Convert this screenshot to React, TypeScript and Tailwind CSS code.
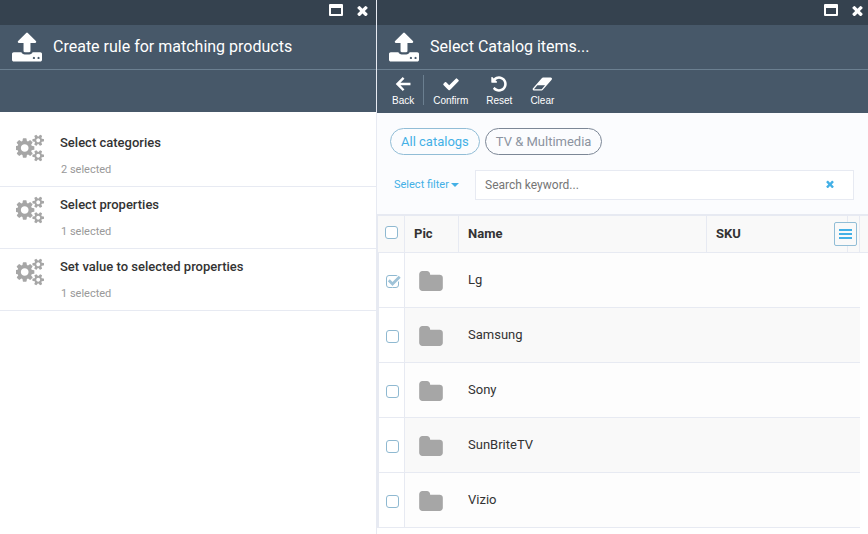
import type { ReactNode } from "react";

const paths = {
  upload:
    "M1280 1472q0-26-19-45t-45-19-45 19-19 45 19 45 45 19 45-19 19-45zm256 0q0-26-19-45t-45-19-45 19-19 45 19 45 45 19 45-19 19-45zm128-224v320q0 40-28 68t-68 28h-1472q-40 0-68-28t-28-68v-320q0-40 28-68t68-28h427q21 56 70.5 92t110.5 36h256q61 0 110.5-36t70.5-92h427q40 0 68 28t28 68zm-325-648q-17 40-59 40h-256v448q0 26-19 45t-45 19h-256q-26 0-45-19t-19-45v-448h-256q-42 0-59-40-17-39 14-69l448-448q18-19 45-19t45 19l448 448q31 30 14 69z",
  times:
    "M1490 1322q0 40-28 68l-136 136q-28 28-68 28t-68-28l-294-294-294 294q-28 28-68 28t-68-28l-136-136q-28-28-28-68t28-68l294-294-294-294q-28-28-28-68t28-68l136-136q28-28 68-28t68 28l294 294 294-294q28-28 68-28t68 28l136 136q28 28 28 68t-28 68l-294 294 294 294q28 28 28 68z",
  check:
    "M1671 566q0 40-28 68l-724 724-136 136q-28 28-68 28t-68-28l-136-136-362-362q-28-28-28-68t28-68l136-136q28-28 68-28t68 28l294 295 656-657q28-28 68-28t68 28l136 136q28 28 28 68z",
  back: "M1640 776v256h-1000l400 400-170 170-698-698 698-698 170 170-400 400z",
  undo: "M1664 896q0 156-61 298t-164 245-245 164-298 61q-172 0-327-72.5t-264-204.5q-7-10-6.5-22.5t8.5-20.5l137-138q10-9 25-9 16 2 23 12 73 95 179 147t225 52q104 0 198.5-40.5t163.5-109.5 109.5-163.5 40.5-198.5-40.5-198.5-109.5-163.5-163.5-109.5-198.5-40.5q-98 0-188 35.5t-160 101.5l137 138q31 30 14 69-17 40-59 40h-448q-26 0-45-19t-19-45v-448q0-42 40-59 39-17 69 14l130 129q107-101 244.5-156.5t284.5-55.5q156 0 298 61t245 164 164 245 61 298z",
  eraser:
    "M960 1408l336-384h-768l-336 384h768zm1013-1077q15 34 9.5 71.5t-30.5 65.5l-896 1024q-38 44-96 44h-768q-38 0-69.5-20.5t-47.5-54.5q-15-34-9.5-71.5t30.5-65.5l896-1024q38-44 96-44h768q38 0 69.5 20.5t47.5 54.5z",
  folder:
    "M1728 608v704q0 92-66 158t-158 66h-1216q-92 0-158-66t-66-158v-960q0-92 66-158t158-66h320q92 0 158 66t66 158v32h672q92 0 158 66t66 158z",
  cogs: "M832 896q0-106-75-181t-181-75-181 75-75 181 75 181 181 75 181-75 75-181zm768 512q0-52-38-90t-90-38-90 38-38 90q0 53 37.5 90.5t90.5 37.5 90.5-37.5 37.5-90.5zm0-1024q0-52-38-90t-90-38-90 38-38 90q0 53 37.5 90.5t90.5 37.5 90.5-37.5 37.5-90.5zm-384 421v185q0 10-7 19.5t-16 10.5l-155 24q-11 35-32 76 34 48 90 115 7 11 7 20 0 12-7 19-23 30-82.5 89.5t-78.5 59.5q-11 0-21-7l-115-90q-37 19-77 31-11 108-23 155-7 24-30 24h-186q-11 0-20-7.5t-10-17.5l-23-153q-34-10-75-31l-118 89q-7 7-20 7-11 0-21-8-144-133-144-160 0-9 7-19 10-14 41-53t47-61q-23-44-35-82l-152-24q-10-1-17-9.5t-7-19.5v-185q0-10 7-19.5t16-10.5l155-24q11-35 32-76-34-48-90-115-7-11-7-20 0-12 7-20 22-30 82-89t79-59q11 0 21 7l115 90q34-18 77-32 11-108 23-154 7-24 30-24h186q11 0 20 7.5t10 17.5l23 153q34 10 75 31l118-89q8-7 20-7 11 0 21 8 144 133 144 160 0 8-7 19-12 16-42 54t-45 60q23 48 34 82l152 23q10 2 17 10.5t7 19.5zm640 533v140q0 16-149 31-12 27-30 52 51 113 51 138 0 4-4 7-122 71-124 71-8 0-46-47t-52-68q-20 2-30 2t-30-2q-14 21-52 68t-46 47q-2 0-124-71-4-3-4-7 0-25 51-138-18-25-30-52-149-15-149-31v-140q0-16 149-31 13-29 30-52-51-113-51-138 0-4 4-7 4-2 35-20t59-34 30-16q8 0 46 46.5t52 67.5q20-2 30-2t30 2q51-71 92-112l6-2q4 0 124 70 4 3 4 7 0 25-51 138 17 23 30 52 149 15 149 31zm0-1024v140q0 16-149 31-12 27-30 52 51 113 51 138 0 4-4 7-122 71-124 71-8 0-46-47t-52-68q-20 2-30 2t-30-2q-14 21-52 68t-46 47q-2 0-124-71-4-3-4-7 0-25 51-138-18-25-30-52-149-15-149-31v-140q0-16 149-31 13-29 30-52-51-113-51-138 0-4 4-7 4-2 35-20t59-34 30-16q8 0 46 46.5t52 67.5q20-2 30-2t30 2q51-71 92-112l6-2q4 0 124 70 4 3 4 7 0 25-51 138 17 23 30 52 149 15 149 31z",
};

function Icon({
  name,
  box = "0 0 1792 1792",
  className,
}: {
  name: keyof typeof paths;
  box?: string;
  className: string;
}) {
  return (
    <svg viewBox={box} fill="currentColor" aria-hidden="true" className={className}>
      <path d={paths[name]} />
    </svg>
  );
}

function BladeHeader({
  title,
  inset,
  children,
}: {
  title: string;
  inset: string;
  children?: ReactNode;
}) {
  return (
    <header className="bg-[#475869] text-white">
      <div className={`flex h-[25px] items-start justify-end gap-[14px] bg-[#35424f] pt-[2px] ${inset}`}>
        <button type="button" aria-label="Maximize" className="flex h-4 items-center">
          <span className="h-3 w-[14px] rounded-[1px] border-2 border-t-4 border-white" />
        </button>
        <button type="button" aria-label="Close" className="flex h-4 items-center">
          <Icon name="times" box="256 256 1280 1280" className="size-[11px]" />
        </button>
      </div>
      <div className="flex h-[45px] items-center gap-[11px] border-b border-[#6b7f90] pl-3">
        <Icon name="upload" box="0 32 1664 1664" className="h-[30px] w-[30px]" />
        <h1 className="text-[16px] leading-5">{title}</h1>
      </div>
      {children}
    </header>
  );
}

function ToolButton({
  label,
  icon,
  box,
}: {
  label: string;
  icon: keyof typeof paths;
  box?: string;
}) {
  return (
    <button type="button" className="flex flex-col items-center gap-[2px] font-['Liberation_Sans',sans-serif] text-[10px] leading-3">
      <Icon name={icon} box={box} className="h-[18px] w-5" />
      {label}
    </button>
  );
}

function CheckBox({ label, checked = false }: { label: string; checked?: boolean }) {
  return (
    <span className="relative block size-[13px]">
      <input
        type="checkbox"
        aria-label={label}
        defaultChecked={checked}
        className="peer block size-[13px] appearance-none rounded-[3px] border border-[#8fb9d1] bg-white"
      />
      <svg
        viewBox="0 0 15 13"
        aria-hidden="true"
        className="pointer-events-none absolute top-0 left-0 hidden h-[13px] w-[15px] peer-checked:block"
      >
        <path d="M3 5.5 6.5 9 13.5 2" fill="none" stroke="#fff" strokeWidth="5" />
        <path d="M2.8 5.3 6.5 9 13.7 1.8" fill="none" stroke="#9fc3d8" strokeWidth="2.8" />
      </svg>
    </span>
  );
}

const steps = [
  { title: "Select categories", count: "2 selected" },
  { title: "Select properties", count: "1 selected" },
  { title: "Set value to selected properties", count: "1 selected" },
];

const items = ["Lg", "Samsung", "Sony", "SunBriteTV", "Vizio"];

function RuleBlade() {
  return (
    <section className="w-[377px] shrink-0 border-r border-[#e7eaf2]">
      <BladeHeader title="Create rule for matching products" inset="pr-2">
        <div className="h-[42px]" />
      </BladeHeader>
      <ul className="pt-[13px]">
        {steps.map((step) => (
          <li key={step.title} className="border-b border-[#e7eaf2]">
            <button type="button" className="flex h-[61px] w-full items-start gap-4 pl-4 text-left">
              <Icon name="cogs" box="0 0 1856 1792" className="mt-[9px] h-7 w-7 text-[#a6a6a6]" />
              <span>
                <span className="block pt-2 text-[13px] leading-5 font-medium text-[#333]">{step.title}</span>
                <span className="block pt-[9px] pl-px text-[11px] leading-4 text-[#999]">{step.count}</span>
              </span>
            </button>
          </li>
        ))}
      </ul>
    </section>
  );
}

function CatalogBlade() {
  return (
    <section className="min-w-0 flex-1">
      <BladeHeader title="Select Catalog items..." inset="pr-[5px]">
        <div className="flex h-[43px] items-start gap-[18px] pt-[5px] pl-[15px]">
          <div className="flex gap-[9px]">
            <ToolButton label="Back" icon="back" />
            <span className="h-[30px] w-px bg-[#6b7f90]" />
            <ToolButton label="Confirm" icon="check" />
          </div>
          <ToolButton label="Reset" icon="undo" />
          <ToolButton label="Clear" icon="eraser" box="0 0 1984 1792" />
        </div>
      </BladeHeader>
      <div className="bg-[#fbfcfe] pt-[15px] pr-[14px] pb-[14px] pl-[13px]">
        <div className="flex gap-[5px] text-[13px]">
          <button type="button" className="h-[27px] rounded-full border border-[#91bdd6] px-[10px] text-[#43b0e6]">
            All catalogs
          </button>
          <button type="button" className="h-[27px] rounded-full border border-[#7c8796] px-[10px] text-[#8b93a0]">
            TV &amp; Multimedia
          </button>
        </div>
        <div className="mt-[15px] flex items-center">
          <button type="button" className="flex w-[85px] items-center gap-[2px] pl-1 text-[11px] text-[#43b0e6]">
            Select filter
            <span className="border-x-4 border-t-4 border-x-transparent border-t-[#43b0e6]" />
          </button>
          <div className="flex h-[30px] min-w-0 flex-1 items-center border border-[#e7eaf2] bg-white pr-[19px] pl-[9px]">
            <input
              type="text"
              aria-label="Search keyword"
              placeholder="Search keyword..."
              className="min-w-0 flex-1 bg-transparent text-[12px] outline-none placeholder:text-[#757575]"
            />
            <button type="button" aria-label="Clear search" className="pb-[2px] text-[#43b0e6]">
              <Icon name="times" box="256 256 1280 1280" className="size-2" />
            </button>
          </div>
        </div>
      </div>
      <div className="border-t-2 border-l border-[#e7eaf2]">
        <table className="w-full table-fixed border-separate border-spacing-0 text-left text-[13px] text-[#333]">
          <colgroup>
            <col className="w-[27px]" />
            <col className="w-[54px]" />
            <col />
            <col className="w-[141px]" />
            <col className="w-3" />
            <col className="w-2" />
          </colgroup>
          <thead>
            <tr className="h-[37px] bg-[#f9f9f9] *:border-b *:border-[#e7eaf2]">
              <th className="border-r pb-1 pl-[7px]">
                <CheckBox label="Select all" />
              </th>
              <th className="border-r pl-[9px] font-bold">Pic</th>
              <th className="border-r pl-[9px] font-bold">Name</th>
              <th className="border-r pl-[9px] font-bold">SKU</th>
              <th className="relative border-r">
                <button
                  type="button"
                  aria-label="Table menu"
                  className="absolute top-[6px] right-[2px] flex h-6 w-[23px] flex-col items-center justify-center gap-[2px] rounded-[2px] border border-[#91bdd6] bg-[#f9f9f9]"
                >
                  <span className="h-[2px] w-[13px] bg-[#43b0e6]" />
                  <span className="h-[2px] w-[13px] bg-[#43b0e6]" />
                  <span className="h-[2px] w-[13px] bg-[#43b0e6]" />
                </button>
              </th>
              <th />
            </tr>
          </thead>
          <tbody>
            {items.map((item, i) => (
              <tr key={item} className="group h-[55px] *:border-[#e7eaf2]">
                <td className="border-r border-b border-l bg-white pt-[2px] pl-[7px]">
                  <CheckBox label={`Select ${item}`} checked={i === 0} />
                </td>
                <td className="border-b bg-[#fdfdfd] pt-[2px] pl-[14px] group-even:bg-[#f9f9f9]">
                  <Icon name="folder" box="64 128 1664 1408" className="h-5 w-6 text-[#a6a6a6]" />
                </td>
                <td className="border-b bg-[#fdfdfd] pl-[9px] group-even:bg-[#f9f9f9]">{item}</td>
                <td className="border-b bg-[#fdfdfd] group-even:bg-[#f9f9f9]" />
                <td className="border-b bg-[#fdfdfd] group-even:bg-[#f9f9f9]" />
                <td />
              </tr>
            ))}
          </tbody>
        </table>
      </div>
    </section>
  );
}

export default function App() {
  return (
    <main className="flex min-h-screen bg-white font-[Roboto,sans-serif]">
      <RuleBlade />
      <CatalogBlade />
    </main>
  );
}
